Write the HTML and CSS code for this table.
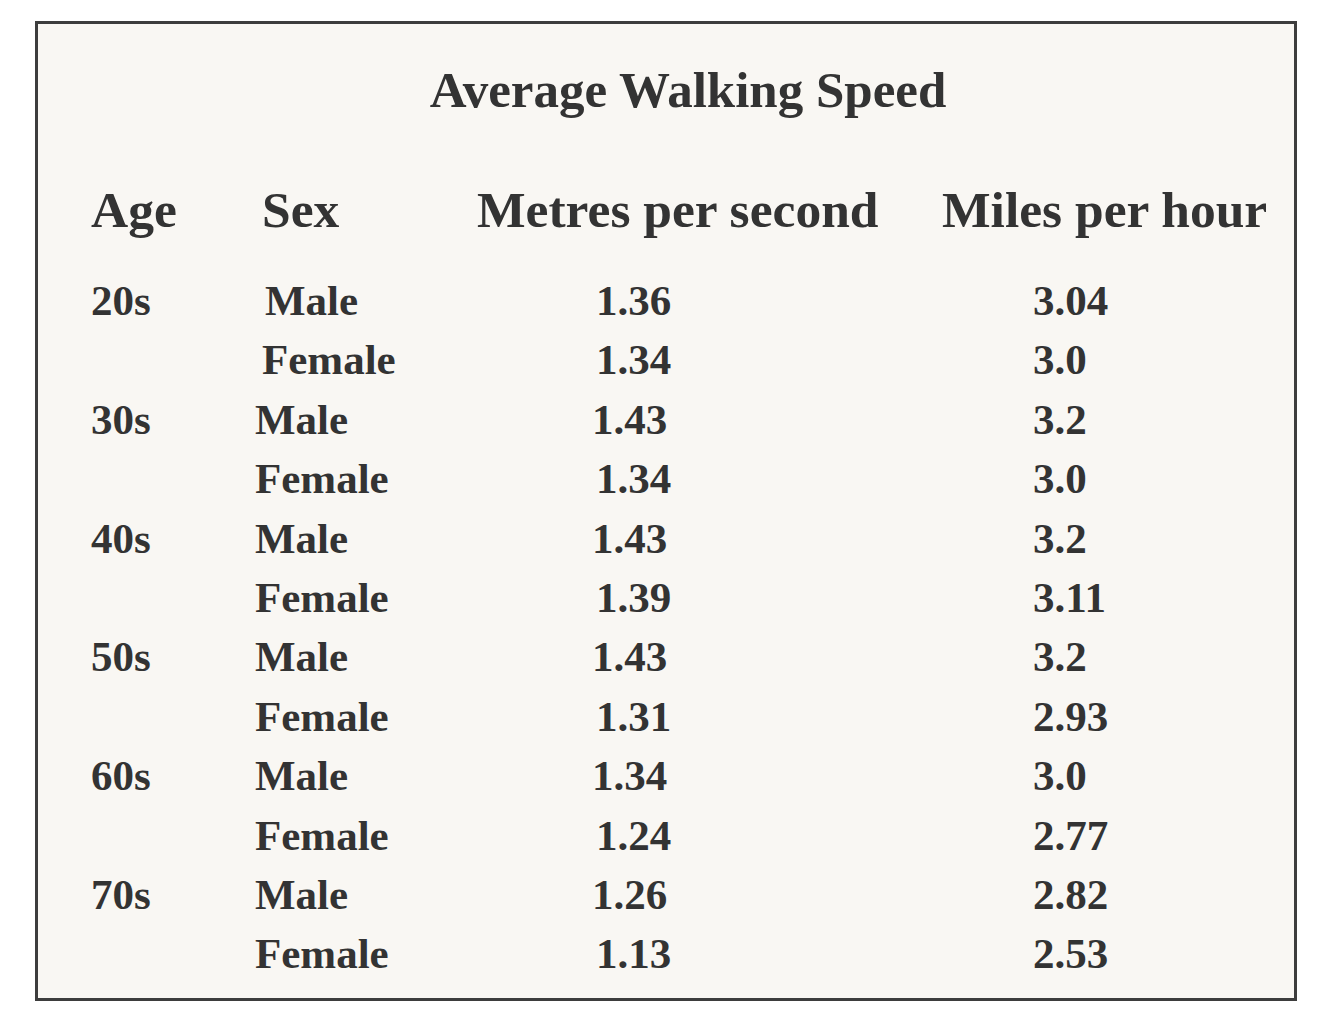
FILE: index.html
```html
<!DOCTYPE html>
<html lang="en">
<head>
<meta charset="utf-8">
<title>Average Walking Speed</title>
<link rel="stylesheet" href="styles.css">
</head>
<body>
<div class="card">
  <h1 class="title">Average Walking Speed</h1>
  <div class="table">
    <div class="head age">Age</div>
    <div class="head sex">Sex</div>
    <div class="head mps">Metres per second</div>
    <div class="head mph">Miles per hour</div>

    <div class="cell age">20s</div><div class="cell sex s1">Male</div><div class="cell mps">1.36</div><div class="cell mph">3.04</div>
    <div class="cell age"></div><div class="cell sex s2">Female</div><div class="cell mps">1.34</div><div class="cell mph">3.0</div>
    <div class="cell age">30s</div><div class="cell sex">Male</div><div class="cell mps n">1.43</div><div class="cell mph">3.2</div>
    <div class="cell age"></div><div class="cell sex">Female</div><div class="cell mps">1.34</div><div class="cell mph">3.0</div>
    <div class="cell age">40s</div><div class="cell sex">Male</div><div class="cell mps n">1.43</div><div class="cell mph">3.2</div>
    <div class="cell age"></div><div class="cell sex">Female</div><div class="cell mps">1.39</div><div class="cell mph">3.11</div>
    <div class="cell age">50s</div><div class="cell sex">Male</div><div class="cell mps n">1.43</div><div class="cell mph">3.2</div>
    <div class="cell age"></div><div class="cell sex">Female</div><div class="cell mps">1.31</div><div class="cell mph">2.93</div>
    <div class="cell age">60s</div><div class="cell sex">Male</div><div class="cell mps n">1.34</div><div class="cell mph">3.0</div>
    <div class="cell age"></div><div class="cell sex">Female</div><div class="cell mps">1.24</div><div class="cell mph">2.77</div>
    <div class="cell age">70s</div><div class="cell sex">Male</div><div class="cell mps n">1.26</div><div class="cell mph">2.82</div>
    <div class="cell age"></div><div class="cell sex">Female</div><div class="cell mps">1.13</div><div class="cell mph">2.53</div>
  </div>
</div>
</body>
</html>
```

FILE: styles.css
```css
html, body {
  margin: 0;
  padding: 0;
  background: #ffffff;
}

body {
  font-family: "Liberation Serif", "DejaVu Serif", serif;
  color: #333333;
  padding: 21px 29px 27px 35px;
}

.card {
  width: 1262px;
  height: 980px;
  box-sizing: border-box;
  border: 3px solid #3d3d3d;
  background: #f9f7f3;
  padding: 36px 0 0 53px;
  font-variant-numeric: oldstyle-nums;
}

.title {
  margin: 0;
  font-size: 51px;
  line-height: 60px;
  font-weight: 700;
  text-align: center;
  padding-left: 0;
  padding-right: 9px;
}

.table {
  margin-top: 60px;
  display: grid;
  grid-template-columns: 164px 222px 465px 1fr;
}

.head {
  font-size: 51.5px;
  line-height: 60px;
  font-weight: 700;
  margin-bottom: 31px;
  white-space: nowrap;
}

.head.sex {
  padding-left: 7px;
}

.cell {
  font-size: 43px;
  line-height: 59.4px;
  font-weight: 700;
  white-space: nowrap;
}

.cell.sex.s1 {
  padding-left: 10px;
}

.cell.sex.s2 {
  padding-left: 7px;
}

.cell.mps {
  padding-left: 119px;
}

.cell.mps.n {
  padding-left: 115px;
}

.cell.mph {
  padding-left: 91px;
}
```
